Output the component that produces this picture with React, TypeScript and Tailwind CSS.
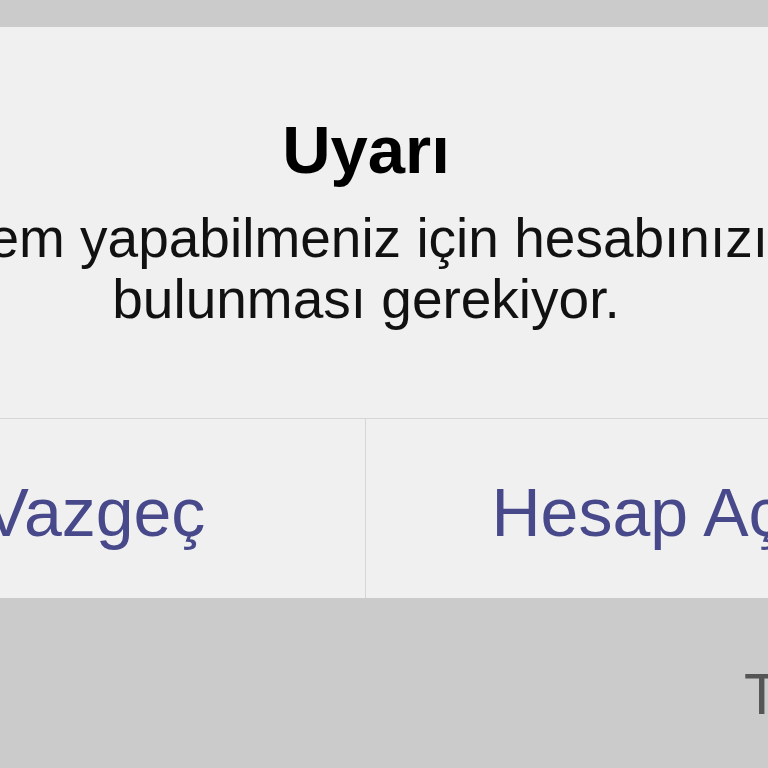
import React from 'react'

const App: React.FC = () => {
  return (
    <div className="w-[768px] h-[768px] overflow-hidden bg-[#cbcbcb] pt-[27px] font-['Liberation_Sans',Arial,sans-serif]">
      <div className="w-[1084px] ml-[-176px] bg-[#f0f0f0] flex flex-col">
        <div className="flex flex-col items-center pt-[85px] pb-[88px] border-b border-[#d6d6d6]">
          <h1 className="text-[67px] leading-[76px] font-bold text-black">Uyarı</h1>
          <p className="mt-[20px] text-[55px] leading-[61px] text-[#111] text-center whitespace-nowrap">
            İşlem yapabilmeniz için hesabınızın
            <br />
            bulunması gerekiyor.
          </p>
        </div>
        <div className="grid grid-cols-2 h-[179px]">
          <button className="flex items-center justify-center pt-[6px] text-[68px] text-[#47498a] border-r border-[#d6d6d6] whitespace-nowrap">
            Vazgeç
          </button>
          <button className="flex items-center justify-center pt-[6px] text-[68px] text-[#47498a] whitespace-nowrap">
            Hesap Aç
          </button>
        </div>
      </div>
      <div className="mt-[63px] pl-[744px] text-[58px] leading-[66px] text-[#555] whitespace-nowrap">Tamam</div>
    </div>
  )
}

export default App
